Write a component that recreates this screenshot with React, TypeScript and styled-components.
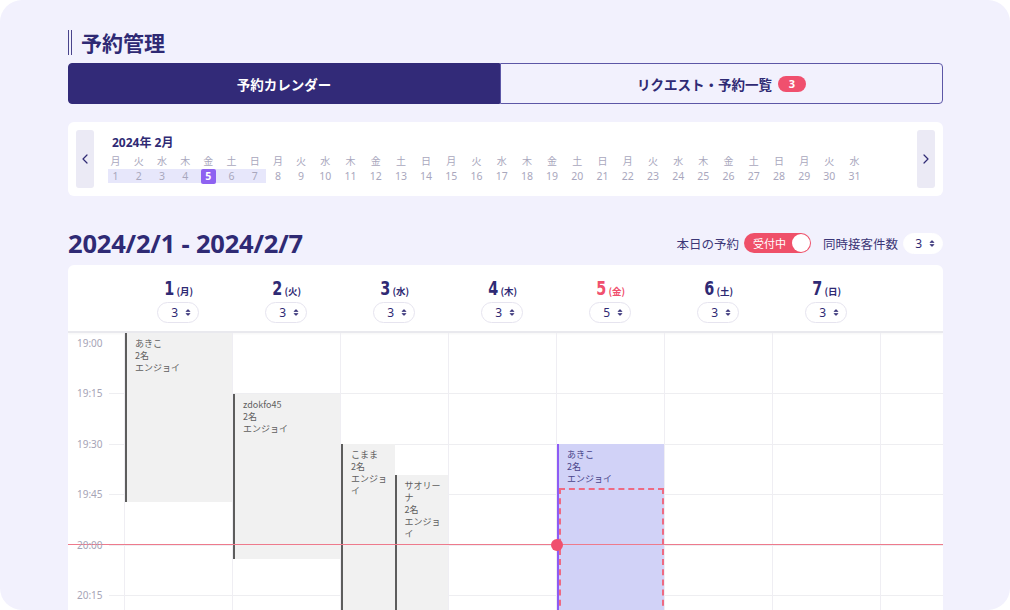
import React from "react";
import styled, { createGlobalStyle } from "styled-components";

const NAVY = "#2f2a74";
const RED = "#f0506e";
const SLOT = 50.6;
const PER_MIN = SLOT / 15;
const ORIGIN = 19 * 60;

const toMin = (t: string) => {
  const [h, m] = t.split(":").map(Number);
  return h * 60 + m;
};
const yOf = (t: string) => 10 + (toMin(t) - ORIGIN) * PER_MIN;

const weekdays = ["月", "火", "水", "木", "金", "土", "日"];
const days = Array.from({ length: 31 }, (_, i) => ({
  n: i + 1,
  wd: weekdays[i % 7],
}));

const head = [
  { n: 1, wd: "月", cap: 3 },
  { n: 2, wd: "火", cap: 3 },
  { n: 3, wd: "水", cap: 3 },
  { n: 4, wd: "木", cap: 3 },
  { n: 5, wd: "金", cap: 5, today: true },
  { n: 6, wd: "土", cap: 3 },
  { n: 7, wd: "日", cap: 3 },
];

type Ev = {
  name: string;
  start: string;
  end: string;
  lane?: number;
  lanes?: number;
  active?: boolean;
  hold?: string;
};

const events: Record<number, Ev[]> = {
  1: [{ name: "あきこ", start: "18:57", end: "19:47" }],
  2: [{ name: "zdokfo45", start: "19:15", end: "20:04" }],
  3: [
    { name: "こまま", start: "19:30", end: "21:00", lane: 0, lanes: 2 },
    { name: "サオリーナ", start: "19:39", end: "21:00", lane: 1, lanes: 2 },
  ],
  5: [{ name: "あきこ", start: "19:30", end: "21:00", active: true, hold: "19:43" }],
};

const times = ["19:00", "19:15", "19:30", "19:45", "20:00", "20:15"];

const UpDown = () => (
  <svg width="6" height="9" viewBox="0 0 6 9">
    <path d="M1 3.5 L3 1.5 L5 3.5 Z M1 5.5 L3 7.5 L5 5.5 Z" fill={NAVY} stroke={NAVY} strokeWidth="0.6" strokeLinejoin="round" />
  </svg>
);

const Chevron = ({ dir }: { dir: "left" | "right" }) => (
  <svg width="6" height="10" viewBox="0 0 6 10">
    <path
      d={dir === "left" ? "M5 1 L1 5 L5 9" : "M1 1 L5 5 L1 9"}
      fill="none"
      stroke={NAVY}
      strokeWidth="1.2"
      strokeLinecap="round"
      strokeLinejoin="round"
    />
  </svg>
);

const App = () => {
  return (
    <>
      <GlobalStyle />
      <Page>
        <PageTitle>
          <Bars />
          予約管理
        </PageTitle>

        <Tabs>
          <Tab $active>予約カレンダー</Tab>
          <Tab>
            リクエスト・予約一覧
            <Badge>3</Badge>
          </Tab>
        </Tabs>

        <DateCard>
          <ArrowButton>
            <Chevron dir="left" />
          </ArrowButton>
          <Strip>
            <MonthLabel>2024年 2月</MonthLabel>
            <DayRow>
              {days.map((d) => (
                <DayCell key={d.n}>
                  <DayWd>{d.wd}</DayWd>
                  <DayNum $week={d.n <= 7} $first={d.n === 1} $selected={d.n === 5}>
                    <span>{d.n}</span>
                  </DayNum>
                </DayCell>
              ))}
            </DayRow>
          </Strip>
          <ArrowButton>
            <Chevron dir="right" />
          </ArrowButton>
        </DateCard>

        <TitleRow>
          <RangeTitle>2024/2/1 - 2024/2/7</RangeTitle>
          <Controls>
            <ControlLabel>本日の予約</ControlLabel>
            <Toggle>
              <span>受付中</span>
              <Knob />
            </Toggle>
            <ControlLabel>同時接客件数</ControlLabel>
            <SelectPill $plain>
              3 <UpDown />
            </SelectPill>
          </Controls>
        </TitleRow>

        <CalendarCard>
          <HeadRow>
            <div />
            {head.map((h) => (
              <HeadCell key={h.n}>
                <HeadDate $today={h.today}>
                  <HeadNum>{h.n}</HeadNum>
                  <HeadWd>({h.wd})</HeadWd>
                </HeadDate>
                <SelectPill>
                  {h.cap} <UpDown />
                </SelectPill>
              </HeadCell>
            ))}
            <div />
          </HeadRow>

          <Body>
            <Gutter>
              {times.map((t, i) => (
                <GutterSlot key={t} $first={i === 0}>
                  <TimeLabel $first={i === 0}>{t}</TimeLabel>
                  <Tick $first={i === 0} />
                </GutterSlot>
              ))}
            </Gutter>
            {[1, 2, 3, 4, 5, 6, 7, 8].map((d) => (
              <DayCol key={d}>
                {times.map((t, i) => (
                  <Slot key={t} $first={i === 0} />
                ))}
                {(events[d] || []).map((e) => {
                  const top = Math.max(0, yOf(e.start));
                  const lanes = e.lanes || 1;
                  const lane = e.lane || 0;
                  return (
                    <EventBlock
                      key={e.name + e.start}
                      $active={e.active}
                      style={{
                        top,
                        height: yOf(e.end) - top,
                        left: `${(lane / lanes) * 100}%`,
                        width: `${100 / lanes}%`,
                      }}
                    >
                      {e.name}
                      <br />
                      2名
                      <br />
                      エンジョイ
                      {e.hold && <HoldBox style={{ top: yOf(e.hold) - top }} />}
                    </EventBlock>
                  );
                })}
              </DayCol>
            ))}
            <NowLine style={{ top: Math.round(yOf("20:00")) - 1 }}>
              <NowDot />
            </NowLine>
          </Body>
        </CalendarCard>
      </Page>
    </>
  );
};

export default App;

const GlobalStyle = createGlobalStyle`
  html, body {
    margin: 0;
    padding: 0;
    background: #ffffff;
  }
  body {
    font-family: "Noto Sans", "Noto Sans CJK JP", sans-serif;
    color: ${NAVY};
  }
`;

const Page = styled.div`
  width: 1010px;
  height: 610px;
  box-sizing: border-box;
  padding: 24px 67px 0 68px;
  background: #f2f1fd;
  border-radius: 22px;
  overflow: hidden;
  display: flex;
  flex-direction: column;
`;

const PageTitle = styled.h1`
  margin: 0;
  height: 36px;
  display: flex;
  align-items: center;
  gap: 9px;
  font-family: "Noto Sans CJK JP", sans-serif;
  font-size: 21px;
  font-weight: 700;
  color: ${NAVY};
`;

const Bars = styled.span`
  width: 2px;
  height: 25px;
  border-left: 1.5px solid #4a448c;
  border-right: 1.5px solid #4a448c;
`;

const Tabs = styled.div`
  margin-top: 3px;
  height: 41px;
  display: grid;
  grid-template-columns: 432px 1fr;
`;

const Tab = styled.div<{ $active?: boolean }>`
  display: flex;
  align-items: center;
  justify-content: center;
  gap: 6px;
  box-sizing: border-box;
  font-family: "Noto Sans CJK JP", sans-serif;
  font-size: 13.5px;
  font-weight: 700;
  color: ${({ $active }) => ($active ? "#ffffff" : NAVY)};
  background: ${({ $active }) => ($active ? "#322a78" : "transparent")};
  border: 1px solid ${({ $active }) => ($active ? "#322a78" : "#5d57a6")};
  border-radius: ${({ $active }) => ($active ? "4px 0 0 4px" : "0 4px 4px 0")};
`;

const Badge = styled.span`
  width: 28px;
  height: 16px;
  border-radius: 8px;
  background: ${RED};
  color: #fff;
  font-family: "Noto Sans", sans-serif;
  font-size: 11px;
  font-weight: 700;
  display: flex;
  align-items: center;
  justify-content: center;
`;

const DateCard = styled.div`
  margin-top: 18px;
  height: 74px;
  box-sizing: border-box;
  padding: 8px;
  background: #ffffff;
  border-radius: 6px;
  display: flex;
  align-items: stretch;
`;

const ArrowButton = styled.div`
  flex: 0 0 18px;
  background: #ebeaf5;
  border-radius: 3px;
  display: flex;
  align-items: center;
  justify-content: center;
`;

const Strip = styled.div`
  flex: 1;
  min-width: 0;
  overflow: hidden;
  padding-left: 10px;
  display: flex;
  flex-direction: column;
`;

const MonthLabel = styled.div`
  padding: 4px 0 0 8px;
  height: 17px;
  font-family: "Noto Sans", "Noto Sans CJK JP", sans-serif;
  font-size: 12px;
  font-weight: 700;
  line-height: 17px;
  color: ${NAVY};
`;

const DayRow = styled.div`
  margin-top: 2px;
  display: flex;
`;

const DayCell = styled.div`
  display: flex;
  flex-direction: column;
  align-items: stretch;
  text-align: center;
  font-size: 10.5px;
  color: #a9a7bd;
`;

const DayWd = styled.span`
  padding: 0 6.6px;
  height: 15px;
  line-height: 15px;
  font-family: "Noto Sans CJK JP", sans-serif;
  font-size: 10px;
`;

const DayNum = styled.span<{ $week?: boolean; $first?: boolean; $selected?: boolean }>`
  height: 14px;
  margin-top: 1px;
  margin-left: ${({ $first }) => ($first ? "4px" : "0")};
  padding: 0 6.6px 0 ${({ $first }) => ($first ? "2.6px" : "6.6px")};
  display: flex;
  justify-content: center;
  align-items: center;
  background: ${({ $week }) => ($week ? "#e7e7fb" : "transparent")};

  span {
    height: 15px;
    line-height: 15px;
    border-radius: 2px;
    margin: 0 ${({ $selected }) => ($selected ? "-4.5px" : "0")};
    padding: 0 ${({ $selected }) => ($selected ? "4.5px" : "0")};
    color: ${({ $selected }) => ($selected ? "#ffffff" : "#a9a7bd")};
    background: ${({ $selected }) => ($selected ? "#8e62f1" : "transparent")};
    font-weight: ${({ $selected }) => ($selected ? 700 : 400)};
  }
`;

const TitleRow = styled.div`
  margin-top: 30px;
  height: 34px;
  margin-bottom: 5px;
  display: flex;
  align-items: center;
  justify-content: space-between;
`;

const RangeTitle = styled.h2`
  margin: 0;
  font-family: "Noto Sans", sans-serif;
  font-size: 25.5px;
  font-weight: 700;
  color: ${NAVY};
  letter-spacing: -0.2px;
`;

const Controls = styled.div`
  display: flex;
  align-items: center;
  gap: 5px;
`;

const ControlLabel = styled.span`
  font-family: "Noto Sans CJK JP", sans-serif;
  font-size: 12.5px;
  color: #3b3677;
  margin-left: 7px;
`;

const Toggle = styled.div`
  width: 67px;
  height: 20px;
  box-sizing: border-box;
  padding: 0 1px 0 9px;
  border-radius: 10px;
  background: #ef5069;
  display: flex;
  align-items: center;
  justify-content: space-between;

  span {
    font-family: "Noto Sans CJK JP", sans-serif;
    font-size: 11px;
    color: #ffffff;
  }
`;

const Knob = styled.div`
  width: 18px;
  height: 18px;
  border-radius: 50%;
  background: #ffffff;
`;

const SelectPill = styled.div<{ $plain?: boolean }>`
  width: ${({ $plain }) => ($plain ? "40px" : "42px")};
  height: 21px;
  box-sizing: border-box;
  padding: 0 7px 0 0;
  border: 1px solid ${({ $plain }) => ($plain ? "#ffffff" : "#e6e4ef")};
  border-radius: 11px;
  background: #ffffff;
  display: flex;
  align-items: center;
  justify-content: flex-end;
  gap: 7px;
  font-family: "Noto Sans", sans-serif;
  font-size: 12px;
  color: ${NAVY};
`;

const CalendarCard = styled.div`
  flex: 1;
  background: #ffffff;
  border-radius: 6px 6px 0 0;
  overflow: hidden;
  display: flex;
  flex-direction: column;
`;

const HeadRow = styled.div`
  height: 68px;
  box-sizing: border-box;
  display: grid;
  grid-template-columns: 56px repeat(7, 108px) 1fr;
  border-bottom: 2px solid #e9e9ee;
  box-shadow: 0 1px 2px rgba(0, 0, 0, 0.04);
`;

const HeadCell = styled.div`
  display: flex;
  flex-direction: column;
  align-items: center;
  padding-top: 11px;
  gap: 6px;
`;

const HeadDate = styled.div<{ $today?: boolean }>`
  display: flex;
  align-items: baseline;
  height: 20px;
  color: ${({ $today }) => ($today ? RED : NAVY)};
`;

const HeadNum = styled.span`
  font-family: "Liberation Sans Narrow", "DejaVu Sans Condensed", sans-serif;
  font-size: 20px;
  font-weight: 700;
  transform: scaleX(0.8);
`;

const HeadWd = styled.span`
  font-family: "Noto Sans CJK JP", sans-serif;
  font-size: 9.5px;
  font-weight: 700;
  margin-left: 1px;
`;

const Body = styled.div`
  position: relative;
  flex: 1;
  display: grid;
  grid-template-columns: 56px repeat(7, 108px) 1fr;
  overflow: hidden;
`;

const Gutter = styled.div`
  position: relative;
  z-index: 3;
  display: flex;
  flex-direction: column;
`;

const GutterSlot = styled.div<{ $first?: boolean }>`
  height: ${({ $first }) => ($first ? "60px" : `${SLOT}px`)};
  flex-shrink: 0;
  display: grid;
  grid-template-columns: 41px 1fr;
  align-items: start;
`;

const TimeLabel = styled.span<{ $first?: boolean }>`
  padding-left: 9px;
  margin-top: ${({ $first }) => ($first ? "3px" : "-7px")};
  height: 14px;
  line-height: 14px;
  font-family: "Noto Sans", sans-serif;
  font-size: 10px;
  color: #a6a4b6;
`;

const Tick = styled.span<{ $first?: boolean }>`
  border-top: 1px solid ${({ $first }) => ($first ? "transparent" : "#eeeef1")};
`;

const DayCol = styled.div`
  position: relative;
  border-left: 1px solid #efeef3;
  display: flex;
  flex-direction: column;
`;

const Slot = styled.div<{ $first?: boolean }>`
  height: ${({ $first }) => ($first ? "60px" : `${SLOT}px`)};
  flex-shrink: 0;
  box-sizing: border-box;
  border-top: 1px solid ${({ $first }) => ($first ? "transparent" : "#eeeef1")};
`;

const EventBlock = styled.div<{ $active?: boolean }>`
  position: absolute;
  box-sizing: border-box;
  padding: 5px 4px 5px 8px;
  background: ${({ $active }) => ($active ? "#d1d2f7" : "#f1f1f1")};
  border-left: 2px solid ${({ $active }) => ($active ? "#8d5cf5" : "#5d5d5d")};
  font-family: "Noto Sans CJK JP", sans-serif;
  font-size: 9px;
  line-height: 12px;
  color: ${({ $active }) => ($active ? "#48448a" : "#5f5f5f")};
  overflow: hidden;
`;

const HoldBox = styled.div`
  position: absolute;
  left: 0;
  right: 0;
  bottom: 0;
  border: 2px dashed #ee6a82;
`;

const NowLine = styled.div`
  position: absolute;
  z-index: 2;
  left: 0;
  right: 0;
  height: 1px;
  background: #ee7a8c;
`;

const NowDot = styled.div`
  position: absolute;
  left: 483px;
  top: -5.5px;
  width: 12px;
  height: 12px;
  border-radius: 50%;
  background: ${RED};
`;
